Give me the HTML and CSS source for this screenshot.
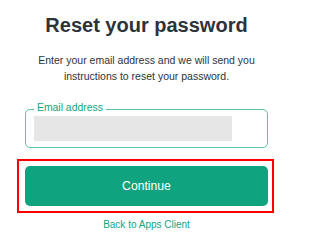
FILE: index.html
```html
<!DOCTYPE html>
<html lang="en">
<head>
<meta charset="utf-8">
<title>Reset your password</title>
<link rel="stylesheet" href="styles.css">
</head>
<body>
<main class="panel">
  <h1 class="title">Reset your password</h1>
  <p class="lead">Enter your email address and we will send you instructions to reset your password.</p>
  <div class="field">
    <span class="field-label">Email address</span>
    <div class="field-value"></div>
  </div>
  <div class="highlight">
    <button class="btn" type="button">Continue</button>
  </div>
  <a class="back" href="#">Back to Apps Client</a>
</main>
</body>
</html>
```
FILE: styles.css
```css
html, body {
  margin: 0;
  padding: 0;
  background: #ffffff;
}
body {
  font-family: "Liberation Sans", Arial, sans-serif;
  color: #2d333a;
}
.panel {
  width: 243px;
  margin-left: 25px;
  display: flex;
  flex-direction: column;
  align-items: stretch;
}
.title {
  margin: 0;
  padding-top: 13px;
  font-size: 20px;
  line-height: 24px;
  font-weight: 700;
  text-align: center;
  color: #2d333a;
}
.lead {
  margin: 14.7px 0 0;
  font-size: 10.5px;
  line-height: 16.7px;
  text-align: center;
  color: #2d333a;
}
.field {
  position: relative;
  margin-top: 24px;
  border-width: 1px;
  border-style: solid;
  border-color: #5cc4a6;
  border-radius: 5px;
  padding: 6px 8px;
}
.field-label {
  position: absolute;
  left: 8px;
  top: -8px;
  padding: 0 3px;
  background: #ffffff;
  font-size: 10.4px;
  line-height: 12px;
  color: #10a37f;
}
.field-value {
  width: 198px;
  height: 25px;
  background: #e6e6e6;
}
.highlight {
  margin: 11px -6px 0 -8px;
  border: 2px solid #ff0000;
  padding: 5px 4px 5px 6px;
}
.btn {
  display: flex;
  align-items: center;
  justify-content: center;
  width: 100%;
  height: 40px;
  border: 0;
  border-radius: 5px;
  background: #10a37f;
  color: #ffffff;
  font-family: "Liberation Sans", Arial, sans-serif;
  font-size: 12.2px;
  padding: 0;
}
.back {
  margin-top: 6px;
  font-size: 10px;
  line-height: 12px;
  text-align: center;
  color: #10a37f;
  text-decoration: none;
}
```
